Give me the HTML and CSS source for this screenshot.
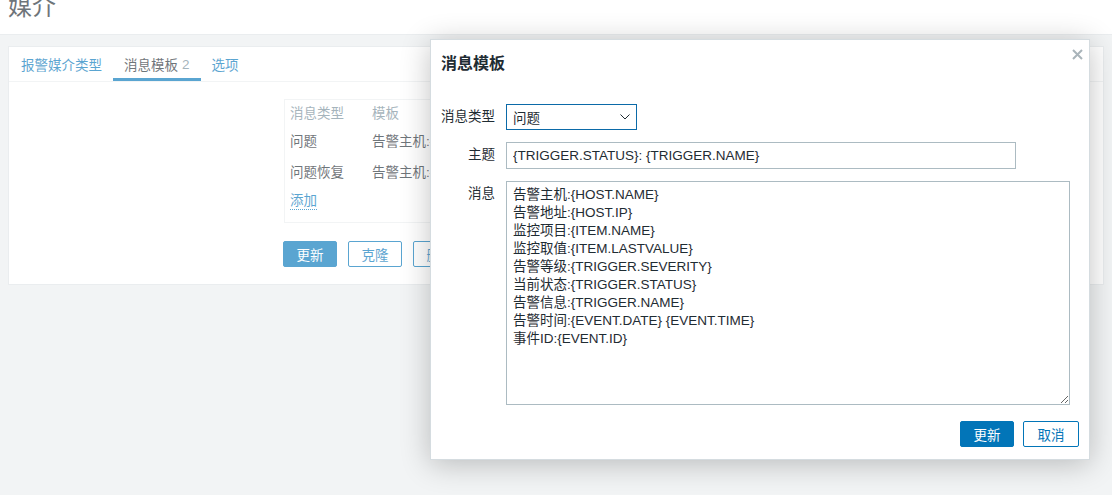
FILE: index.html
```html
<!DOCTYPE html>
<html lang="zh-CN">
<head>
<meta charset="utf-8">
<title>媒介</title>
<link rel="stylesheet" href="styles.css">
</head>
<body>
<header class="header"><h1 class="title">媒介</h1></header>
<main class="main">
  <section class="card">
    <nav class="tabs">
      <a class="tab">报警媒介类型</a>
      <a class="tab active">消息模板 <span class="count">2</span></a>
      <a class="tab">选项</a>
    </nav>
    <div class="card-body">
      <div class="tpl-table">
        <div class="tpl-row head"><span class="c1">消息类型</span><span class="c2">模板</span></div>
        <div class="tpl-row"><span class="c1">问题</span><span class="c2">告警主机:{HOST.NAME} 告警地址:{HOST.IP}</span></div>
        <div class="tpl-row"><span class="c1">问题恢复</span><span class="c2">告警主机:{HOST.NAME} 告警地址:{HOST.IP}</span></div>
        <div class="tpl-row"><a class="add">添加</a></div>
      </div>
      <div class="actions">
        <button class="btn primary">更新</button>
        <button class="btn">克隆</button>
        <button class="btn">删除</button>
        <button class="btn">取消</button>
      </div>
    </div>
  </section>
</main>
<div class="overlay"></div>
<div class="dialog">
  <div class="dialog-head">
    <h4 class="dialog-title">消息模板</h4>
    <span class="close"><svg width="11" height="11" viewBox="0 0 11 11"><path d="M1 1L10 10M10 1L1 10" stroke="#a9b4ba" stroke-width="2"/></svg></span>
  </div>
  <div class="form">
    <label class="lbl">消息类型</label>
    <div class="select"><span>问题</span><svg width="10" height="6" viewBox="0 0 10 6"><path d="M0.5 0.5L5 5L9.5 0.5" fill="none" stroke="#1f2c33" stroke-width="1"/></svg></div>
    <label class="lbl">主题</label>
    <input class="input" type="text" value="{TRIGGER.STATUS}: {TRIGGER.NAME}">
    <label class="lbl">消息</label>
    <textarea class="textarea">告警主机:{HOST.NAME}
告警地址:{HOST.IP}
监控项目:{ITEM.NAME}
监控取值:{ITEM.LASTVALUE}
告警等级:{TRIGGER.SEVERITY}
当前状态:{TRIGGER.STATUS}
告警信息:{TRIGGER.NAME}
告警时间:{EVENT.DATE} {EVENT.TIME}
事件ID:{EVENT.ID}</textarea>
  </div>
  <div class="dialog-foot">
    <button class="btn primary solid">更新</button>
    <button class="btn solid-out">取消</button>
  </div>
</div>
</body>
</html>
```
FILE: styles.css
```css
* { box-sizing: border-box; }
html, body { margin: 0; padding: 0; }
body {
  width: 1112px;
  height: 495px;
  overflow: hidden;
  background: #ebeef0;
  color: #1f2c33;
  font-family: "Liberation Sans", Arial, "Noto Sans CJK SC", sans-serif;
  font-size: 13.5px;
  position: relative;
}
.header {
  height: 35px;
  background: #fff;
  border-bottom: 1px solid #dfe4e7;
  padding: 0 8px;
  overflow: hidden;
}
.title {
  margin: -5px 0 0;
  font-size: 24px;
  line-height: 24px;
  font-weight: normal;
  color: #1f2c33;
}
.main { padding: 11px 8px 0; }
.card {
  background: #fff;
  border: 1px solid #dfe4e7;
}
.tabs {
  display: flex;
  height: 35px;
  border-bottom: 1px solid #ebeef0;
  padding-left: 1px;
}
.tab {
  display: flex;
  align-items: center;
  padding: 0 11px;
  color: #0275b8;
  cursor: pointer;
}
.tab.active {
  color: #1f2c33;
  box-shadow: inset 0 -3px 0 #0275b8;
}
.count { color: #768d99; margin-left: 4px; }
.card-body { padding: 17px 0 17px 275px; }
.tpl-table {
  width: 600px;
  border: 1px solid #ebeef0;
  padding: 0 5px 5px;
}
.tpl-row { display: flex; height: 31px; align-items: center; white-space: nowrap; }
.tpl-row.head { height: 24px; color: #768d99; }
.c1 { width: 82px; }
.add {
  color: #0275b8;
  border-bottom: 1px dotted #0275b8;
  line-height: 16px;
}
.actions { display: flex; gap: 11px; margin-top: 18px; margin-left: -1px; }
.btn {
  height: 26px;
  min-width: 54px;
  padding: 0 12px;
  font: inherit;
  border-radius: 2px;
  border: 1px solid #0275b8;
  background: #fff;
  color: #0275b8;
}
.btn.primary { background: #0275b8; color: #fff; }
.overlay {
  position: absolute;
  inset: 0;
  background: rgba(255, 255, 255, 0.35);
}
.dialog {
  position: absolute;
  left: 430px;
  top: 39px;
  width: 660px;
  height: 421px;
  background: #fff;
  border: 1px solid #d5dce0;
  box-shadow: 0 4px 28px rgba(0, 0, 0, 0.24);
  padding: 0 10px 0 10px;
}
.dialog-head { position: relative; padding: 14px 0 0; height: 64px; }
.dialog-title {
  margin: 0;
  font-size: 16px;
  line-height: 20px;
  font-weight: bold;
  color: #1f2c33;
}
.close { position: absolute; top: 9px; right: -4px; display: flex; }
.form {
  display: grid;
  grid-template-columns: 54px auto;
  column-gap: 11px;
  row-gap: 12px;
  justify-items: start;
}
.lbl { justify-self: end; line-height: 26px; white-space: nowrap; }
.select {
  width: 131px;
  height: 26px;
  border: 1px solid #0b6aa8;
  display: flex;
  align-items: center;
  justify-content: space-between;
  padding: 0 6px;
}
.input {
  width: 510px;
  height: 27px;
  border: 1px solid #acbbc2;
  padding: 0 6px;
  font: inherit;
  color: #1f2c33;
  outline: none;
}
.textarea {
  width: 564px;
  height: 224px;
  border: 1px solid #acbbc2;
  padding: 4px 6px;
  font: inherit;
  line-height: 18px;
  color: #1f2c33;
  outline: none;
  overflow: hidden;
}
.dialog-foot {
  display: flex;
  justify-content: flex-end;
  gap: 9px;
  margin-top: 16px;
}
.btn.solid-out { min-width: 56px; }
```
